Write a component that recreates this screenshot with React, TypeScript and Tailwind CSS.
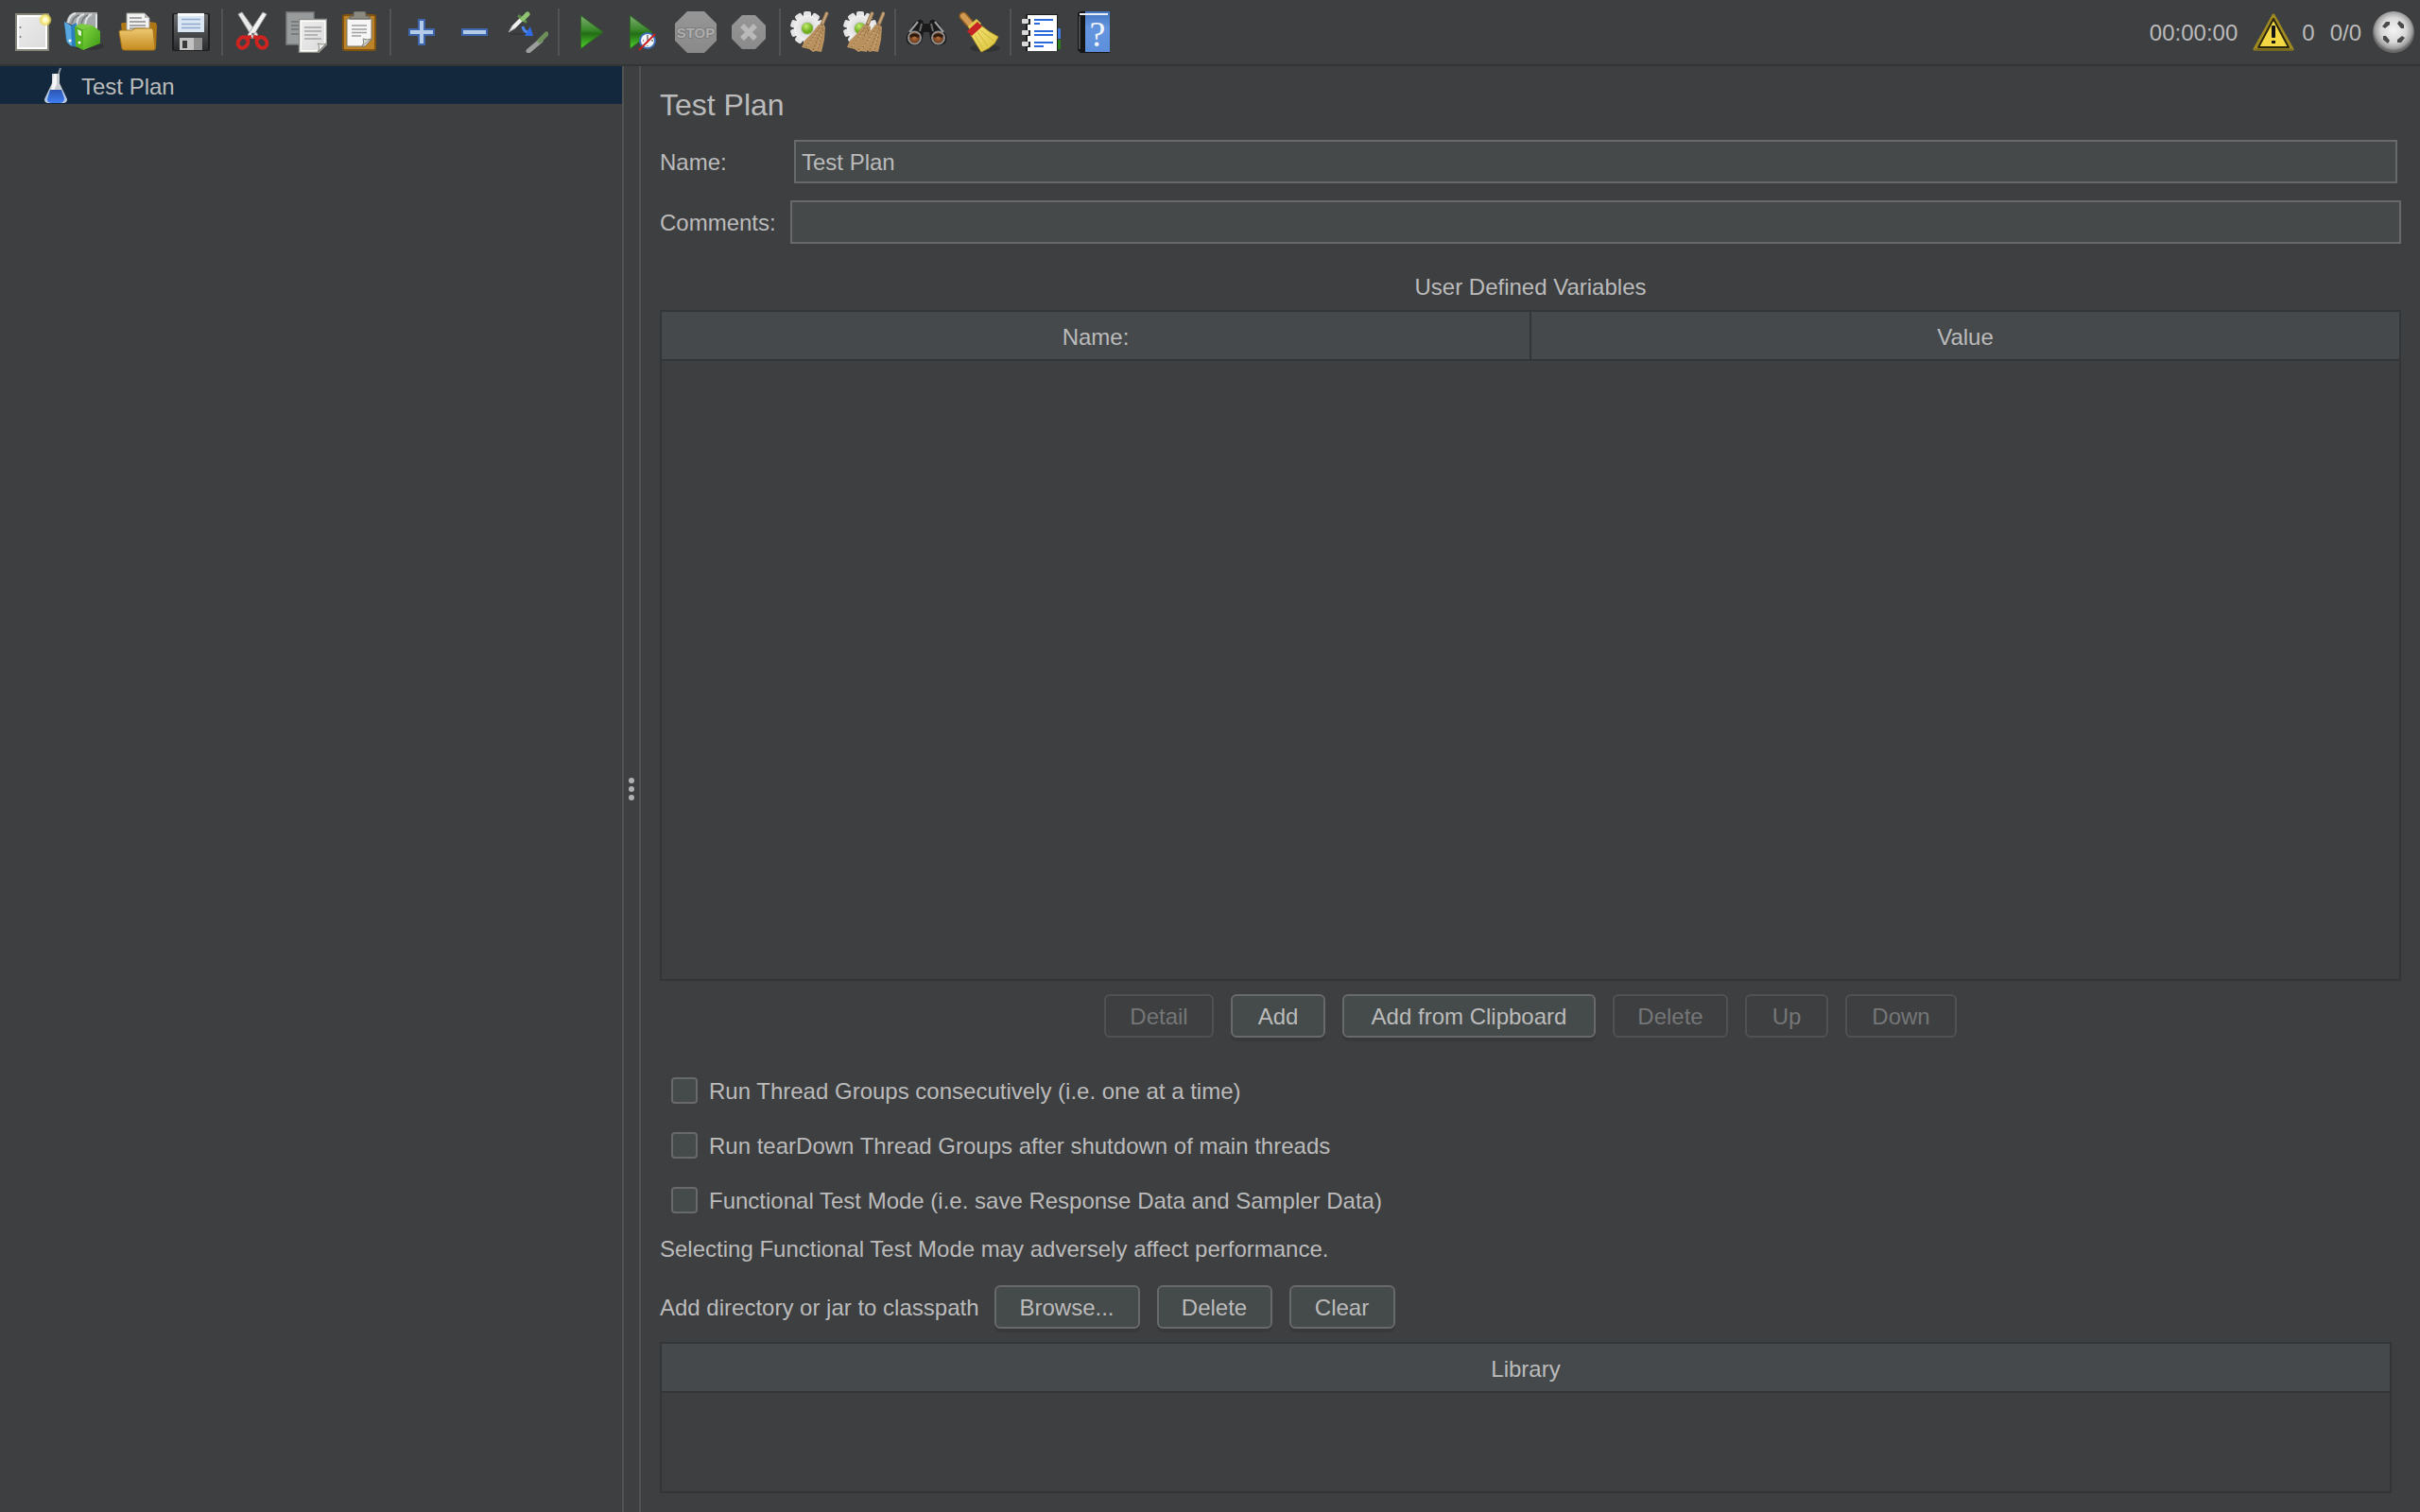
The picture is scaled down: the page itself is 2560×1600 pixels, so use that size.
import { useState } from "react";
import type { ReactNode } from "react";

type IconProps = { children: ReactNode };

function Icon({ children }: IconProps) {
  return (
    <svg viewBox="0 0 44 44" className="size-11" aria-hidden="true">
      {children}
    </svg>
  );
}

const gearTeeth = [0, 36, 72, 108, 144, 180, 216, 252, 288, 324];

function Gear() {
  return (
    <g>
      {gearTeeth.map((a) => (
        <rect key={a} x="14" y="0" width="8" height="10" rx="2" fill="#e4e4e4" transform={`rotate(${a} 18 18)`} />
      ))}
      <circle cx="18" cy="18" r="14" fill="url(#gearFill)" />
      <circle cx="18" cy="18" r="7" fill="#c6c8c4" />
      <circle cx="18" cy="18" r="6" fill="url(#greenBall)" />
    </g>
  );
}

function Whisk({ x }: { x: number }) {
  return (
    <g transform={`translate(${x} 0)`}>
      <path d="M39 1 L34 13 L31 20" stroke="#94734d" strokeWidth="4" fill="none" />
      <path d="M39 1 L34 13" stroke="#c4a27a" strokeWidth="2" fill="none" />
      <path d="M30 14 L37 16 L36 30 L33 43 L27 42 L24 43 L20 40 L12 38 L15 31 L23 23 Z" fill="#b8915f" />
      <path
        d="M31 17 L17 38 M34 17 L24 41 M35 19 L29 42"
        stroke="#8a6840"
        strokeWidth="1"
        strokeDasharray="2 2"
        fill="none"
      />
      <path d="M29 22 L18 37 M33 24 L28 40" stroke="#d9b584" strokeWidth="1" strokeDasharray="2 2" />
    </g>
  );
}

// Shared gradients used by the toolbar icons
function IconDefs() {
  return (
    <svg className="absolute size-0" aria-hidden="true">
      <defs>
        <linearGradient id="paper" x1="0" y1="0" x2="1" y2="1">
          <stop offset="0" stopColor="#ececec" />
          <stop offset="1" stopColor="#dcdcdc" />
        </linearGradient>
        <radialGradient id="glow">
          <stop offset="0" stopColor="#ffffff" />
          <stop offset="0.45" stopColor="#fbf3a0" />
          <stop offset="0.75" stopColor="#ecd94e" stopOpacity="0.8" />
          <stop offset="1" stopColor="#ecd94e" stopOpacity="0" />
        </radialGradient>
        <linearGradient id="folder" x1="0" y1="0" x2="0" y2="1">
          <stop offset="0" stopColor="#ecc873" />
          <stop offset="1" stopColor="#c68c1e" />
        </linearGradient>
        <linearGradient id="floppy" x1="0" y1="0" x2="0" y2="1">
          <stop offset="0" stopColor="#6a6b6d" />
          <stop offset="1" stopColor="#2b2c2f" />
        </linearGradient>
        <linearGradient id="play" x1="0" y1="0" x2="0" y2="1">
          <stop offset="0" stopColor="#7fae76" />
          <stop offset="0.42" stopColor="#3c8a2c" />
          <stop offset="0.55" stopColor="#236d16" />
          <stop offset="1" stopColor="#4fd42c" />
        </linearGradient>
        <linearGradient id="stopFill" x1="0" y1="0" x2="0" y2="1">
          <stop offset="0" stopColor="#969696" />
          <stop offset="1" stopColor="#8a8a8a" />
        </linearGradient>
        <radialGradient id="gearFill">
          <stop offset="0" stopColor="#d0d0d0" />
          <stop offset="1" stopColor="#f0f0f0" />
        </radialGradient>
        <radialGradient id="greenBall" cx="0.4" cy="0.3">
          <stop offset="0" stopColor="#c3ee74" />
          <stop offset="1" stopColor="#6fae1c" />
        </radialGradient>
        <radialGradient id="lens">
          <stop offset="0" stopColor="#b5703c" />
          <stop offset="1" stopColor="#5f2f12" />
        </radialGradient>
        <linearGradient id="straw" x1="0" y1="0" x2="1" y2="1">
          <stop offset="0" stopColor="#f6e67a" />
          <stop offset="1" stopColor="#d8c03a" />
        </linearGradient>
        <linearGradient id="green" x1="0" y1="0" x2="1" y2="1">
          <stop offset="0" stopColor="#7fd63c" />
          <stop offset="1" stopColor="#3f9a16" />
        </linearGradient>
        <linearGradient id="book" x1="0" y1="0" x2="0" y2="1">
          <stop offset="0" stopColor="#4475c0" />
          <stop offset="0.4" stopColor="#6496e0" />
          <stop offset="1" stopColor="#5c8edb" />
        </linearGradient>
        <radialGradient id="ball" cx="0.5" cy="0.45">
          <stop offset="0" stopColor="#f4f4f4" />
          <stop offset="0.6" stopColor="#d8d8d8" />
          <stop offset="0.88" stopColor="#a0a0a0" />
          <stop offset="1" stopColor="#6b6b6b" />
        </radialGradient>
        <linearGradient id="liquid" x1="0" y1="0" x2="0" y2="1">
          <stop offset="0" stopColor="#2a55b0" />
          <stop offset="1" stopColor="#3f7df2" />
        </linearGradient>
      </defs>
    </svg>
  );
}

const newIcon = (
  <Icon>
    <rect x="5" y="3" width="34" height="38" fill="#ffffff" stroke="#85857b" strokeWidth="2" />
    <rect x="8" y="6" width="28" height="32" fill="url(#paper)" />
    <circle cx="9.5" cy="17" r="1" fill="#777" />
    <circle cx="9.5" cy="27" r="1" fill="#777" />
    <circle cx="36" cy="9" r="7" fill="url(#glow)" />
  </Icon>
);

const templatesIcon = (
  <Icon>
    <ellipse cx="26" cy="37" rx="16" ry="4" fill="#2c2d2e" opacity="0.6" />
    <path d="M2 12 Q4 1 13 1 L35 1 L35 20 L14 16 Z" fill="#a4a8ab" />
    <path d="M4 12 Q6 3 12 2 M13 14 Q14 4 21 3 M22 14 Q23 5 29 3 M34 3 V18" stroke="#dfe2e3" strokeWidth="2" fill="none" />
    <path d="M8 13 Q9 6 16 4 M18 14 Q19 6 25 4" stroke="#73787c" strokeWidth="1.5" fill="none" />
    <path d="M0 11 L7 15 L13 12 L13 38 L6 36 L2 31 Z" fill="#2b7fc0" />
    <path d="M0 11 L7 15 L8 37 L3 33 Z" fill="#58a8e0" />
    <path d="M11 16 L18 13 L30 15 L20 20 Z" fill="#7ccb40" />
    <path d="M11 16 L20 20 L20 41 L12 37 Z" fill="#52b021" />
    <path d="M20 20 L30 15 L38 21 L38 34 L20 41 Z" fill="url(#green)" />
    <path d="M14 19 L18 21 L18 26 L15 25 Z" fill="#e3f6d5" />
    <circle cx="6" cy="31" r="1.5" fill="#fff" />
    <circle cx="16" cy="33" r="1.5" fill="#fff" />
  </Icon>
);

const openIcon = (
  <Icon>
    <path d="M4 14 Q4 12 6 12 L12 12 L15 15 L33 15 L34 11 L41 12 L42 15 L41 39 L38 41 L8 41 Z" fill="#ad7614" />
    <path d="M10 2 L29 2 L34 7 L34 21 L10 21 Z" fill="#f2f2f2" stroke="#9b9b97" strokeWidth="1" />
    <path d="M29 2 L29 7 L34 7 Z" fill="#b4b4b2" />
    <path d="M13 7 H26 M13 11 H30 M13 15 H30 M13 18 H30" stroke="#8c8c8c" strokeWidth="1.5" />
    <path d="M2 22 Q2 20 4 20 L16 20 L19 18 L36 18 Q38 18 38 20 L40 40 Q40 41 38 41 L8 41 Q5 41 5 39 Z" fill="url(#folder)" stroke="#a9761a" strokeWidth="1" />
  </Icon>
);

const saveIcon = (
  <Icon>
    <rect x="2" y="2" width="40" height="40" rx="2" fill="#1d1e1f" />
    <rect x="4" y="3" width="36" height="38" rx="1" fill="url(#floppy)" />
    <rect x="8" y="2" width="28" height="20" fill="#dbe6f3" />
    <rect x="8" y="2" width="28" height="3" fill="#f8fafc" />
    <path d="M12 8.5 H32 M12 13.5 H32 M12 17.5 H32" stroke="#8ea9cc" strokeWidth="1.5" />
    <rect x="10" y="28" width="24" height="13" fill="#c2c2c2" />
    <rect x="25" y="28" width="9" height="13" fill="#8f8f8f" />
    <rect x="13" y="31" width="5" height="8" fill="#3a3a3a" />
  </Icon>
);

const cutIcon = (
  <Icon>
    <path d="M6 3 L10 1 L27 25 L22 29 Z" fill="#e9e9e9" stroke="#a5a5a5" strokeWidth="1" />
    <path d="M36 3 L32 1 L16 25 L20 29 Z" fill="#f3f3f3" stroke="#a5a5a5" strokeWidth="1" />
    <circle cx="21.5" cy="24" r="1.5" fill="#777" />
    <g fill="none" stroke="#cf2320" strokeWidth="4">
      <ellipse cx="11" cy="33" rx="5" ry="6" transform="rotate(35 11 33)" />
      <ellipse cx="31" cy="33" rx="5" ry="6" transform="rotate(-35 31 33)" />
      <path d="M14 28 L20 27 M28 28 L22 27" />
    </g>
  </Icon>
);

const copyIcon = (
  <Icon>
    <rect x="1" y="1" width="29" height="34" fill="#999c9c" stroke="#7c7e7e" strokeWidth="1.5" />
    <path d="M6 11 H24 M6 15 H24 M6 19 H20 M6 24 H15" stroke="#6f7272" strokeWidth="1.5" />
    <path d="M14.5 8.5 H43.5 V35 L35 43.5 H14.5 Z" fill="#fdfdfd" stroke="#8b8b86" strokeWidth="1.5" />
    <path d="M17 11 H41 V33 L33 41 H17 Z" fill="url(#paper)" />
    <path d="M20 17 H38 M20 21 H38 M20 25 H34 M20 29 H38" stroke="#a4a4a4" strokeWidth="1.5" />
    <path d="M34 43 Q37 37 34 34 Q39 36 43 34 Z" fill="#eeeeec" stroke="#8b8b86" strokeWidth="1" />
  </Icon>
);

const pasteIcon = (
  <Icon>
    <rect x="5" y="4" width="34" height="37" rx="2" fill="#bd8329" stroke="#80540f" strokeWidth="2" />
    <path d="M9 8 H35 V30 L28 37 H9 Z" fill="#f6f6f6" stroke="#7b7768" strokeWidth="1" />
    <path d="M14 15 H30 M14 19 H30 M14 22.5 H30 M14 26 H24" stroke="#a0a0a0" strokeWidth="1.5" />
    <path d="M25 37 Q28 33 26 29 Q31 31 35 29 Z" fill="#d6d6d2" stroke="#85857d" strokeWidth="1" />
    <path d="M12 8 V5 H16 V2 Q16 0 18 0 H27 Q29 0 29 2 V5 H33 V8 Z" fill="#8b8a80" stroke="#62615a" strokeWidth="1" />
  </Icon>
);

const plusIcon = (
  <Icon>
    <path d="M19 9 H25 V19 H35 V25 H25 V35 H19 V25 H9 V19 H19 Z" fill="#b3cbe8" stroke="#3f66ad" strokeWidth="2" />
  </Icon>
);

const minusIcon = (
  <Icon>
    <rect x="9" y="19" width="26" height="6" fill="#b3cbe8" stroke="#3f66ad" strokeWidth="2" />
  </Icon>
);

const toggleIcon = (
  <Icon>
    <path d="M4 24 L25 24" stroke="#2c2d2e" strokeWidth="1" opacity="0.6" />
    <path d="M2 22 L6 15 L14 7 L17 10 L9 18 Z" fill="#f1f1f1" stroke="#9a9a9a" strokeWidth="1" />
    <path d="M13 5 L20 11" stroke="#5b8a45" strokeWidth="3" strokeLinecap="round" />
    <path d="M17 8 L22 3" stroke="#8fc271" strokeWidth="5" strokeLinecap="round" />
    <path d="M17 16 Q18 22 23 22" stroke="#4a86f0" strokeWidth="3" fill="none" />
    <path d="M25 16 L28 26 L19 26 Z" fill="#2f6be6" />
    <g opacity="0.8">
      <path d="M23 42 L36 31" stroke="#b4b6b4" strokeWidth="5" strokeLinecap="round" />
      <path d="M35 31 L42 24" stroke="#79a45f" strokeWidth="5" strokeLinecap="round" />
    </g>
  </Icon>
);

const playIcon = (
  <Icon>
    <path d="M12.5 4.5 L36 22 L12.5 39.5 Z" fill="url(#play)" stroke="#2d6a20" strokeWidth="1" />
  </Icon>
);

const playNoPauseIcon = (
  <Icon>
    <path d="M8.5 4.5 L32 22 L8.5 39.5 Z" fill="url(#play)" stroke="#2d6a20" strokeWidth="1" />
    <circle cx="27" cy="31" r="8" fill="#f4f6fa" stroke="#3d6fb4" strokeWidth="2" />
    <path d="M27 25 V31 M31 31 H33 M22 31 H23 M27 36 V37" stroke="#777" strokeWidth="1.5" />
    <path d="M18 41 L35 24" stroke="#c8201c" strokeWidth="2" />
  </Icon>
);

const stopIcon = (
  <Icon>
    <path d="M13 0 H31 L44 13 V31 L31 44 H13 L0 31 V13 Z" fill="url(#stopFill)" />
    <text x="22" y="28" textAnchor="middle" fontFamily="Liberation Sans, sans-serif" fontSize="15" fontWeight="700" fill="#adadad" stroke="#7c7c7c" strokeWidth="2" paintOrder="stroke">
      STOP
    </text>
  </Icon>
);

const shutdownIcon = (
  <Icon>
    <path d="M15 4 H29 L40 15 V29 L29 40 H15 L4 29 V15 Z" fill="url(#stopFill)" />
    <path d="M15 15 L29 29 M29 15 L15 29" stroke="#b9b9b9" strokeWidth="5.5" />
  </Icon>
);

const clearIcon = (
  <Icon>
    <Gear />
    <Whisk x={0} />
  </Icon>
);

const clearAllIcon = (
  <Icon>
    <Gear />
    <Whisk x={-8} />
    <Whisk x={4} />
  </Icon>
);

const searchIcon = (
  <Icon>
    <path d="M14 9 Q18 8 19 13 L25 13 Q26 8 30 9 L35 12 L43 26 Q45 36 35 36 Q27 36 26 28 L25 22 L19 22 L18 28 Q17 36 9 36 Q-1 36 1 26 L9 12 Z" fill="#1a1a1b" />
    <path d="M13 11 L4 22 M31 11 L40 22" stroke="#a0a0a0" strokeWidth="2" />
    <path d="M17 13 L15 21 M27 13 L29 21" stroke="#6c6c6c" strokeWidth="2" />
    <circle cx="9.5" cy="28" r="6.5" fill="url(#lens)" stroke="#8f8f8f" strokeWidth="2" />
    <circle cx="34.5" cy="28" r="6.5" fill="url(#lens)" stroke="#8f8f8f" strokeWidth="2" />
    <path d="M5 27 Q9 23 14 27 M30 27 Q34 23 39 27" stroke="#2b1a10" strokeWidth="3" fill="none" />
  </Icon>
);

const broomIcon = (
  <Icon>
    <ellipse cx="28" cy="39" rx="16" ry="4" fill="#28292a" opacity="0.6" />
    <path d="M5 5 L12 13" stroke="#8f5c20" strokeWidth="9" strokeLinecap="round" />
    <path d="M5 5 L12 13" stroke="#d39a54" strokeWidth="6" strokeLinecap="round" />
    <path d="M10 16 L19 8 L24 13 L14 23 Z" fill="#e0ca4a" />
    <path d="M13 25 L24 15 Q32 22 42 27 L38 34 L32 39 L24 43 Q19 35 13 25 Z" fill="url(#straw)" stroke="#b59b22" strokeWidth="1" />
    <path d="M17 25 L26 40 M20 22 L31 37 M23 20 L37 31" stroke="#d0b736" strokeWidth="1" />
    <path d="M9 21 L20 11 L25 16 L14 26 Z" fill="#c62424" />
  </Icon>
);

const functionIcon = (
  <Icon>
    <rect x="36" y="18" width="6" height="11" fill="#3f7be0" />
    <rect x="36" y="30" width="6" height="10" fill="#2b7d1c" />
    <rect x="5" y="3" width="34" height="39" fill="#1c1c1c" />
    <rect x="7" y="4" width="31" height="38" fill="#ffffff" />
    <g fill="#1c1c1c">
      <rect x="6" y="8" width="4" height="6" />
      <rect x="6" y="20" width="4" height="6" />
      <rect x="6" y="32" width="4" height="6" />
    </g>
    <g fill="#d9d9d9">
      <rect x="1" y="8" width="7" height="5" rx="1" />
      <rect x="1" y="20" width="7" height="5" rx="1" />
      <rect x="1" y="32" width="7" height="5" rx="1" />
    </g>
    <path d="M14 9 H34 M14 13 H20 M14 21 H34 M14 25 H34 M14 33 H34 M14 37 H24" stroke="#2b68dc" strokeWidth="2" />
  </Icon>
);

const helpIcon = (
  <Icon>
    <path d="M4 2 L7 0 H38 V44 H7 L4 41 Z" fill="#161616" />
    <path d="M6 5 V40" stroke="#4b4b4b" strokeWidth="2" />
    <rect x="12" y="0" width="26" height="43" fill="url(#book)" />
    <rect x="6" y="2" width="30" height="2" fill="#e8edf5" />
    <text x="25" y="37" textAnchor="middle" fontFamily="Liberation Serif, serif" fontSize="38" fill="#f2f6fc">
      ?
    </text>
  </Icon>
);

const warningIcon = (
  <Icon>
    <path d="M22 4 L42 40 H2 Z" fill="#e2c238" stroke="#a08a20" strokeWidth="3" strokeLinejoin="round" />
    <path d="M22 8 L38 38 H6 Z" fill="#f3d743" stroke="#2a2610" strokeWidth="2" strokeLinejoin="round" />
    <path d="M2 40.5 H42" stroke="#786820" strokeWidth="2" />
    <rect x="20" y="15" width="4" height="13" rx="1" fill="#151515" />
    <rect x="20" y="31" width="4" height="3" fill="#151515" />
  </Icon>
);

const expandIcon = (
  <Icon>
    <circle cx="22" cy="22" r="22" fill="url(#ball)" />
    <g fill="#4a4a4a">
      {[0, 90, 180, 270].map((a) => (
        <path key={a} d="M10 16 L14 11 L18 11 L18 14 L13 18 Z" transform={`rotate(${a} 22 22)`} />
      ))}
    </g>
  </Icon>
);

type Tool = { label: string; icon: ReactNode; disabled?: boolean };

const toolGroups: Tool[][] = [
  [
    { label: "New", icon: newIcon },
    { label: "Templates...", icon: templatesIcon },
    { label: "Open", icon: openIcon },
    { label: "Save", icon: saveIcon },
  ],
  [
    { label: "Cut", icon: cutIcon },
    { label: "Copy", icon: copyIcon },
    { label: "Paste", icon: pasteIcon },
  ],
  [
    { label: "Expand All", icon: plusIcon },
    { label: "Collapse All", icon: minusIcon },
    { label: "Toggle", icon: toggleIcon },
  ],
  [
    { label: "Start", icon: playIcon },
    { label: "Start no pauses", icon: playNoPauseIcon },
    { label: "Stop", icon: stopIcon, disabled: true },
    { label: "Shutdown", icon: shutdownIcon, disabled: true },
  ],
  [
    { label: "Clear", icon: clearIcon },
    { label: "Clear All", icon: clearAllIcon },
  ],
  [
    { label: "Search", icon: searchIcon },
    { label: "Reset Search", icon: broomIcon },
  ],
  [
    { label: "Function Helper Dialog", icon: functionIcon },
    { label: "Help", icon: helpIcon },
  ],
];

function Toolbar() {
  return (
    <header className="flex items-center justify-between border-b-2 border-[#333436] px-1.5">
      <div className="flex items-center">
        {toolGroups.map((group, i) => (
          <div key={i} className="flex items-center">
            {i > 0 && <div className="mx-1 h-[50px] w-0.5 bg-[#525355]" />}
            {group.map((tool) => (
              <button key={tool.label} type="button" aria-label={tool.label} disabled={tool.disabled} className="px-1.5 py-3">
                {tool.icon}
              </button>
            ))}
          </div>
        ))}
      </div>
      <div className="flex items-center">
        <span className="pt-0.5">00:00:00</span>
        <button type="button" aria-label="Show log" className="ml-4 flex items-center gap-2">
          {warningIcon}
          <span className="pt-0.5">0</span>
        </button>
        <span className="ml-4 mr-3 pt-0.5">0/0</span>
        {expandIcon}
      </div>
    </header>
  );
}

function TestTree() {
  return (
    <aside className="w-[660px] shrink-0 border-r-2 border-[#525355]">
      <ul>
        <li className="flex h-10 items-center bg-[#13283c] pl-[46px]">
          <svg viewBox="0 0 26 40" className="h-10 w-[26px]" aria-hidden="true">
            <path d="M16 8 L18 2" stroke="#8d959c" strokeWidth="2" />
            <path d="M9 8 H17 V18 L25 35 Q25 39 21 39 H5 Q1 39 1 35 L9 18 Z" fill="#c9cdd2" />
            <path d="M11 8 H14 V19 L11 26 L8 26 Z" fill="#f4f5f6" />
            <path d="M6 26 H20 L24 35 Q24 38 21 38 H5 Q2 38 2 35 Z" fill="#a9c4f2" />
            <path d="M7 25 H19 L22 34 Q22 39 17 39 H9 Q4 39 4 35 Z" fill="url(#liquid)" />
          </svg>
          <span className="ml-3.5 pt-1">Test Plan</span>
        </li>
      </ul>
    </aside>
  );
}

function Splitter() {
  return (
    <div className="flex w-[18px] shrink-0 flex-col items-center justify-center gap-[3px] border-r-2 border-[#525355]">
      <span className="size-1.5 rounded-full bg-[#afb1b3]" />
      <span className="size-1.5 rounded-full bg-[#afb1b3]" />
      <span className="size-1.5 rounded-full bg-[#afb1b3]" />
    </div>
  );
}

type ButtonProps = { children: ReactNode; width: string; disabled?: boolean };

function Button({ children, width, disabled }: ButtonProps) {
  return (
    <button
      type="button"
      disabled={disabled}
      className={`${width} h-[46px] whitespace-nowrap rounded-md border-2 border-[#67696a] bg-[#454a4a] pt-0.5 text-center shadow-[0_4px_0_#38393b] disabled:border-[#505153] disabled:bg-transparent disabled:text-[#757677] disabled:shadow-none`}
    >
      {children}
    </button>
  );
}

function Grid({ columns }: { columns: string[] }) {
  return (
    <table className="w-full table-fixed border-collapse">
      <thead>
        <tr className="border-b-2 border-[#333638]">
          {columns.map((column) => (
            <th key={column} scope="col" className="h-[51px] border-l-2 border-[#333638] bg-[#45494b] p-0 pt-1 font-normal first:border-l-0">
              {column}
            </th>
          ))}
        </tr>
      </thead>
    </table>
  );
}

const options = [
  "Run Thread Groups consecutively (i.e. one at a time)",
  "Run tearDown Thread Groups after shutdown of main threads",
  "Functional Test Mode (i.e. save Response Data and Sampler Data)",
];

function TestPlanForm() {
  const [name, setName] = useState("Test Plan");
  const [comments, setComments] = useState("");

  return (
    <main className="flex min-w-0 flex-1 flex-col p-5">
      <h1 className="pt-0.5 text-[32px] leading-[38px]">Test Plan</h1>

      <div className="mt-[18px] flex items-center">
        <label htmlFor="name" className="w-[138px] shrink-0 pt-0.5">Name:</label>
        <input
          id="name"
          value={name}
          onChange={(e) => setName(e.target.value)}
          className="mx-1 h-[46px] min-w-0 flex-1 border-2 border-[#67696a] bg-[#45494a] px-1.5 pt-0.5 outline-none"
        />
      </div>
      <div className="mt-[18px] flex items-center">
        <label htmlFor="comments" className="w-[138px] shrink-0 pt-0.5">Comments:</label>
        <input
          id="comments"
          value={comments}
          onChange={(e) => setComments(e.target.value)}
          className="h-[46px] min-w-0 flex-1 border-2 border-[#67696a] bg-[#45494a] px-1.5 pt-0.5 outline-none"
        />
      </div>

      <h2 className="mt-8 text-center">User Defined Variables</h2>
      <div className="mt-2.5 flex-1 border-2 border-[#333638]">
        <Grid columns={["Name:", "Value"]} />
      </div>
      <div className="mt-3.5 flex justify-center gap-[18px]">
        <Button width="w-[116px]" disabled>Detail</Button>
        <Button width="w-[100px]">Add</Button>
        <Button width="w-[268px]">Add from Clipboard</Button>
        <Button width="w-[122px]" disabled>Delete</Button>
        <Button width="w-[88px]" disabled>Up</Button>
        <Button width="w-[118px]" disabled>Down</Button>
      </div>

      <div className="mt-[42px] flex flex-col items-start gap-[30px] pl-3">
        {options.map((option) => (
          <label key={option} className="flex h-7 items-center gap-3">
            <input type="checkbox" className="size-7 appearance-none rounded-sm border-2 border-[#67696a] bg-[#454a4a] checked:bg-[#8a8d8e]" />
            <span className="pt-0.5">{option}</span>
          </label>
        ))}
      </div>
      <p className="mt-6">Selecting Functional Test Mode may adversely affect performance.</p>

      <div className="mt-6 flex items-center gap-[18px]">
        <span className="-mr-0.5 pt-0.5">Add directory or jar to classpath</span>
        <Button width="w-[154px]">Browse...</Button>
        <Button width="w-[122px]">Delete</Button>
        <Button width="w-[112px]">Clear</Button>
      </div>
      <div className="mr-2.5 mt-3.5 h-40 border-2 border-[#333638]">
        <Grid columns={["Library"]} />
      </div>
    </main>
  );
}

export default function App() {
  return (
    <div className="flex min-h-screen flex-col bg-[#3e3f41] font-['Liberation_Sans',Arial,sans-serif] text-[24px] leading-7 text-[#bbbbbb]">
      <IconDefs />
      <Toolbar />
      <div className="flex flex-1">
        <TestTree />
        <Splitter />
        <TestPlanForm />
      </div>
    </div>
  );
}
